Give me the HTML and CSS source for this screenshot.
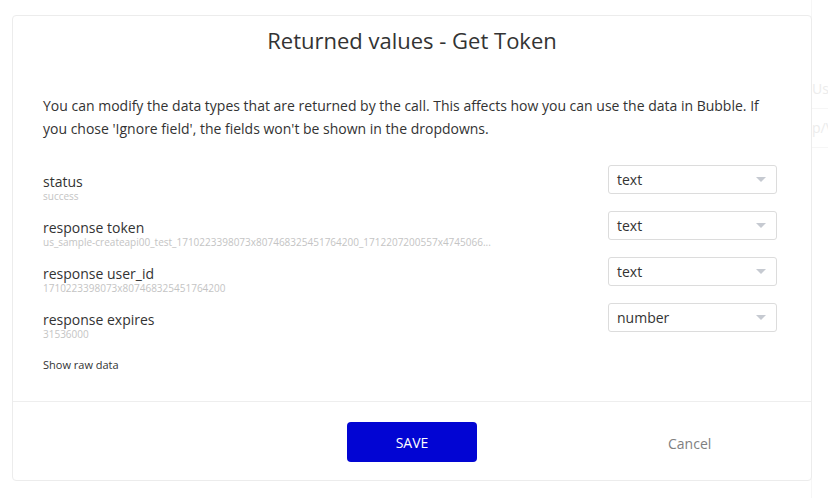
FILE: index.html
```html
<!DOCTYPE html>
<html>
<head>
<meta charset="utf-8">
<link rel="stylesheet" href="styles.css">
</head>
<body>
<div class="backdrop">
  <div class="bg-col">
    <div class="bg-line">User</div>
    <div class="bg-line">p/Vers</div>
  </div>
</div>
<div class="modal">
  <div class="header">Returned values - Get Token</div>
  <div class="content">
    <p class="desc">You can modify the data types that are returned by the call. This affects how you can use the data in Bubble. If you chose 'Ignore field', the fields won't be shown in the dropdowns.</p>
    <div class="rows">
      <div class="row">
        <div class="info"><div class="label">status</div><div class="sub">success</div></div>
        <div class="select"><span>text</span><i class="arrow"></i></div>
      </div>
      <div class="row">
        <div class="info"><div class="label">response token</div><div class="sub">us_sample-createapi00_test_1710223398073x807468325451764200_1712207200557x4745066...</div></div>
        <div class="select"><span>text</span><i class="arrow"></i></div>
      </div>
      <div class="row">
        <div class="info"><div class="label">response user_id</div><div class="sub">1710223398073x807468325451764200</div></div>
        <div class="select"><span>text</span><i class="arrow"></i></div>
      </div>
      <div class="row">
        <div class="info"><div class="label">response expires</div><div class="sub">31536000</div></div>
        <div class="select"><span>number</span><i class="arrow"></i></div>
      </div>
    </div>
    <div class="raw">Show raw data</div>
  </div>
  <div class="footer">
    <div></div>
    <button class="save">SAVE</button>
    <div class="cancel">Cancel</div>
  </div>
</div>
</body>
</html>
```

FILE: styles.css
```css
html, body {
  margin: 0;
  padding: 0;
  background: #fff;
  font-family: "Open Sans", "Liberation Sans", sans-serif;
  color: #333;
}
.backdrop {
  height: 498px;
  overflow: hidden;
  display: flex;
  justify-content: flex-end;
}
.bg-col {
  width: 16px;
  padding-top: 70px;
  border-left: 1px solid #f6f6f6;
  overflow: hidden;
}
.bg-line {
  color: #ececec;
  font-size: 14px;
  line-height: 38px;
  white-space: nowrap;
  overflow: hidden;
  border-bottom: 1px solid #f6f6f6;
}
.modal {
  position: absolute;
  left: 12px;
  top: 15px;
  width: 798px;
  height: 464px;
  border: 1px solid #ececec;
  border-radius: 4px;
  background: #fff;
  display: flex;
  flex-direction: column;
}
.header {
  text-align: center;
  font-size: 22px;
  line-height: 30px;
  padding-top: 9px;
  color: #333;
  flex-shrink: 0;
}
.content {
  flex: 1;
  min-height: 0;
  padding: 0 34px 0 30px;
}
.desc {
  margin: 39px 0 0 0;
  font-size: 14px;
  line-height: 23px;
}
.rows {
  margin-top: 25px;
  display: flex;
  flex-direction: column;
  gap: 9px;
}
.row {
  display: flex;
  justify-content: space-between;
  align-items: flex-start;
  height: 37px;
}
.info {
  padding-top: 8px;
}
.label {
  font-size: 14px;
  line-height: 17px;
}
.sub {
  font-size: 10px;
  line-height: 13px;
  color: #c4c4c4;
  white-space: nowrap;
}
.select {
  height: 27px;
  width: 149px;
  border: 1px solid #dcdcdc;
  border-radius: 3px;
  display: flex;
  align-items: center;
  justify-content: space-between;
  padding: 0 10px 0 8px;
  box-sizing: content-box;
  font-size: 14px;
}
.arrow {
  width: 0;
  height: 0;
  border-left: 5px solid transparent;
  border-right: 5px solid transparent;
  border-top: 5px solid #c6cad1;
}
.raw {
  margin-top: 17px;
  font-size: 11px;
  line-height: 16px;
}
.footer {
  flex-shrink: 0;
  height: 78px;
  border-top: 1px solid #eeeeee;
  display: grid;
  grid-template-columns: 1fr 130px 1fr;
  align-items: start;
}
.save {
  margin-top: 20px;
  height: 40px;
  width: 130px;
  background: #0205d3;
  border: none;
  border-radius: 4px;
  color: #fff;
  font-family: "Open Sans", "Liberation Sans", sans-serif;
  font-size: 14px;
}
.cancel {
  margin-top: 32px;
  padding-left: 191px;
  font-size: 14px;
  line-height: 20px;
  color: #808080;
}
```
